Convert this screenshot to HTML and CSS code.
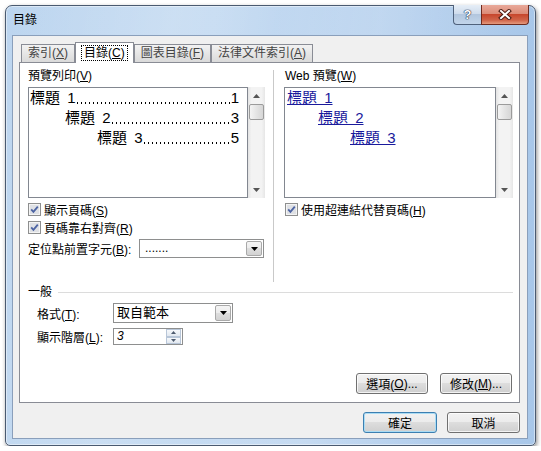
FILE: index.html
```html
<!DOCTYPE html>
<html lang="zh-TW">
<head>
    <meta charset="UTF-8">
    <title>目錄</title>
    <link rel="stylesheet" href="styles.css">
</head>
<body>
    <div class="window">
        <div class="titlebar">
            <span class="title">目錄</span>
            <div class="caption-btns">
                <span class="cap help">?</span>
                <span class="cap close">
                    <svg width="14" height="11" viewBox="0 0 14 11">
                        <path d="M3 2 L11 9 M11 2 L3 9" stroke="#4a1a12" stroke-width="4" stroke-linecap="square" fill="none"/>
                        <path d="M3 2 L11 9 M11 2 L3 9" stroke="#fff" stroke-width="2" stroke-linecap="square" fill="none"/>
                    </svg>
                </span>
            </div>
        </div>

        <div class="client">
            <!-- 頁籤 -->
            <div class="tabs">
                <span class="tab">索引(<u>X</u>)</span>
                <span class="tab active"><span class="focus">目錄(<u>C</u>)</span></span>
                <span class="tab">圖表目錄(<u>F</u>)</span>
                <span class="tab">法律文件索引(<u>A</u>)</span>
            </div>

            <div class="panel">
                <div class="previews">
                    <!-- 預覽列印 -->
                    <div class="col col-print">
                        <div class="label">預覽列印(<u>V</u>)</div>
                        <div class="listbox">
                            <div class="list print">
                                <div class="toc-line"><span class="entry">標題 1</span><span class="leader"></span><span>1</span></div>
                                <div class="toc-line l2"><span class="entry">標題 2</span><span class="leader"></span><span>3</span></div>
                                <div class="toc-line l3"><span class="entry">標題 3</span><span class="leader"></span><span>5</span></div>
                            </div>
                            <div class="vscroll">
                                <span class="sb-arrow"><svg width="7" height="4"><path d="M0 4 L3.5 0 L7 4 Z" fill="#555"/></svg></span>
                                <span class="sb-thumb"></span>
                                <span class="sb-space"></span>
                                <span class="sb-arrow"><svg width="7" height="4"><path d="M0 0 L7 0 L3.5 4 Z" fill="#555"/></svg></span>
                            </div>
                        </div>
                        <div class="check">
                            <svg class="cb" width="13" height="13" viewBox="0 0 13 13">
                                <rect x="0.5" y="0.5" width="12" height="12" fill="#f4f4f4" stroke="#8e8f8f"/>
                                <rect x="2" y="2" width="9" height="9" fill="#dfe1e5"/>
                                <path d="M3.2 6.4 L5.4 8.8 L9.8 3.6" stroke="#4d64a3" stroke-width="1.8" fill="none"/>
                            </svg>
                            <span>顯示頁碼(<u>S</u>)</span>
                        </div>
                        <div class="check">
                            <svg class="cb" width="13" height="13" viewBox="0 0 13 13">
                                <rect x="0.5" y="0.5" width="12" height="12" fill="#f4f4f4" stroke="#8e8f8f"/>
                                <rect x="2" y="2" width="9" height="9" fill="#dfe1e5"/>
                                <path d="M3.2 6.4 L5.4 8.8 L9.8 3.6" stroke="#4d64a3" stroke-width="1.8" fill="none"/>
                            </svg>
                            <span>頁碼靠右對齊(<u>R</u>)</span>
                        </div>
                        <div class="field">
                            <span class="flabel wide">定位點前置字元(<u>B</u>):</span>
                            <div class="combo leader-combo">
                                <span class="combo-value">.......</span>
                                <span class="combo-btn"><svg width="7" height="4"><path d="M0 0 L7 0 L3.5 4 Z" fill="#000"/></svg></span>
                            </div>
                        </div>
                    </div>

                    <div class="divider"></div>

                    <!-- Web 預覽 -->
                    <div class="col col-web">
                        <div class="label">Web 預覽(<u>W</u>)</div>
                        <div class="listbox">
                            <div class="list web">
                                <a class="toc-link">標題 1</a>
                                <a class="toc-link l2">標題 2</a>
                                <a class="toc-link l3">標題 3</a>
                            </div>
                            <div class="vscroll">
                                <span class="sb-arrow"><svg width="7" height="4"><path d="M0 4 L3.5 0 L7 4 Z" fill="#555"/></svg></span>
                                <span class="sb-thumb"></span>
                                <span class="sb-space"></span>
                                <span class="sb-arrow"><svg width="7" height="4"><path d="M0 0 L7 0 L3.5 4 Z" fill="#555"/></svg></span>
                            </div>
                        </div>
                        <div class="check">
                            <svg class="cb" width="13" height="13" viewBox="0 0 13 13">
                                <rect x="0.5" y="0.5" width="12" height="12" fill="#f4f4f4" stroke="#8e8f8f"/>
                                <rect x="2" y="2" width="9" height="9" fill="#dfe1e5"/>
                                <path d="M3.2 6.4 L5.4 8.8 L9.8 3.6" stroke="#4d64a3" stroke-width="1.8" fill="none"/>
                            </svg>
                            <span>使用超連結代替頁碼(<u>H</u>)</span>
                        </div>
                    </div>
                </div>

                <!-- 一般 -->
                <div class="group-head">一般</div>
                <div class="field indent row-format">
                    <span class="flabel">格式(<u>T</u>):</span>
                    <div class="combo format-combo">
                        <span class="combo-value">取自範本</span>
                        <span class="combo-btn"><svg width="7" height="4"><path d="M0 0 L7 0 L3.5 4 Z" fill="#000"/></svg></span>
                    </div>
                </div>
                <div class="field indent row-level">
                    <span class="flabel">顯示階層(<u>L</u>):</span>
                    <div class="spin">
                        <span class="spin-value">3</span>
                        <span class="spin-btns">
                            <span class="spin-btn"><svg width="5" height="3"><path d="M0 3 L2.5 0 L5 3 Z" fill="#4d5a6e"/></svg></span>
                            <span class="spin-btn"><svg width="5" height="3"><path d="M0 0 L5 0 L2.5 3 Z" fill="#4d5a6e"/></svg></span>
                        </span>
                    </div>
                </div>

                <div class="panel-buttons">
                    <span class="btn">選項(<u>O</u>)...</span>
                    <span class="btn">修改(<u>M</u>)...</span>
                </div>
            </div>

            <div class="dialog-buttons">
                <span class="btn default ok">確定</span>
                <span class="btn cancel">取消</span>
            </div>
        </div>
    </div>
</body>
</html>
```

FILE: styles.css
```css
body {
    margin: 0;
    background: #fff;
    font-family: "Liberation Sans", "Noto Sans CJK TC", sans-serif;
    font-size: 12px;
    color: #000;
}

/* 視窗外框 */
.window {
    box-sizing: border-box;
    width: 531px;
    height: 441px;
    margin: 5px 0 0 5px;
    padding: 0 7px 6px 6px;
    border: 1px solid #4a5a70;
    border-radius: 7px 7px 5px 5px;
    background:
        linear-gradient(100deg, rgba(255,255,255,0) 0%, rgba(255,255,255,.18) 28%, rgba(255,255,255,.05) 45%, rgba(255,255,255,.15) 62%, rgba(255,255,255,0) 85%),
        linear-gradient(90deg, #bcd5ef 0%, #c2d9f1 40%, #b4cfed 75%, #a8c7e9 100%);
    box-shadow: inset 0 0 0 1px rgba(255,255,255,.45), 1px 2px 4px rgba(0,0,0,.45);
    display: flex;
    flex-direction: column;
}
.titlebar {
    height: 29px;
    flex: none;
    display: flex;
    justify-content: space-between;
    align-items: flex-start;
}
.title {
    padding: 7px 0 0 1px;
    line-height: 14px;
}
.caption-btns {
    display: flex;
    margin: -1px -1px 0 0;
}
.cap {
    box-sizing: border-box;
    height: 20px;
    border: 1px solid #50627c;
    border-top: none;
    display: flex;
    align-items: center;
    justify-content: center;
}
.help {
    width: 28px;
    border-right: none;
    border-radius: 0 0 0 4px;
    background: linear-gradient(#e6eef7 0%, #cfdcec 45%, #b2c6de 50%, #c2d5ea 100%);
    color: #fff;
    font-weight: bold;
    font-size: 13px;
    text-shadow: 0 0 1px #1d2d4a, 0 0 1px #1d2d4a, 0 0 1px #1d2d4a;
}
.close {
    width: 48px;
    border-color: #6e2b1f;
    border-radius: 0 0 4px 0;
    background: linear-gradient(#e9a99a 0%, #dc8c78 45%, #c7472d 50%, #d0654a 80%, #e59a7e 100%);
}

/* 對話方塊內容 */
.client {
    flex: 1;
    border: 1px solid #8a9fbb;
    background: #f0f0f0;
    padding: 6px 0 0 6px;
}
.tabs {
    display: flex;
    align-items: flex-end;
    height: 20px;
    margin-left: 2px;
}
.tab {
    box-sizing: border-box;
    height: 18px;
    padding: 0 6px;
    border: 1px solid #898c95;
    border-bottom: none;
    line-height: 17px;
    color: #444;
    background: linear-gradient(#f2f2f2, #dadada);
}
.tab.active {
    position: relative;
    z-index: 1;
    height: 21px;
    margin-bottom: -1px;
    padding: 2px 6px 0;
    background: #fff;
    color: #000;
}
.focus {
    display: inline-block;
    padding: 0 2px;
    line-height: 14px;
    outline: 1px dotted #000;
}

.panel {
    box-sizing: border-box;
    width: 501px;
    height: 341px;
    border: 1px solid #898c95;
    background: #fff;
    padding: 6px 5px 0 8px;
}
.previews {
    display: flex;
    height: 213px;
}
.col {
    flex: none;
    min-width: 0;
}
.col-print {
    width: 237px;
}
.col-web {
    width: 229px;
}
.divider {
    flex: none;
    width: 1px;
    margin: 1px 10px 0 8px;
    background: #c9c9c9;
}
.label {
    line-height: 14px;
    margin-bottom: 4px;
}
.col-web .label {
    padding-left: 1px;
}
.listbox {
    display: flex;
    height: 111px;
}
.list {
    flex: 1;
    min-width: 0;
    overflow: hidden;
    border: 1px solid #828790;
    background: #fff;
    font-size: 15px;
    line-height: 20px;
    word-spacing: 3px;
}
.list.print {
    padding: 0 8px 0 1px;
}
.toc-line {
    display: flex;
    white-space: nowrap;
}
.toc-line.l2 { padding-left: 35px; }
.toc-line.l3 { padding-left: 67px; }
/* 前置字元：點線 */
.leader {
    flex: 1;
    min-width: 0;
    margin: 0 1px;
    background: linear-gradient(90deg, #000 0 1.5px, transparent 1.5px) left 14px / 4px 2px repeat-x;
}
.list.web {
    padding-left: 2px;
}
.toc-link {
    display: block;
    width: max-content;
    color: #1a1a9c;
    text-decoration: underline;
}
.toc-link.l2 { margin-left: 31px; }
.toc-link.l3 { margin-left: 63px; }

/* 捲軸 */
.vscroll {
    flex: none;
    width: 17px;
    display: flex;
    flex-direction: column;
    align-items: center;
    background: linear-gradient(90deg, #e3e3e3, #f3f3f3 20%, #f3f3f3 80%, #e6e6e6);
}
.sb-arrow {
    height: 17px;
    display: flex;
    align-items: center;
    justify-content: center;
}
.sb-thumb {
    box-sizing: border-box;
    width: 15px;
    height: 16px;
    border: 1px solid #9b9b9b;
    border-radius: 2px;
    background: linear-gradient(90deg, #f4f4f4, #e4e4e4 50%, #d6d6d6);
}
.sb-space {
    flex: 1;
}

/* 核取方塊 */
.check {
    display: flex;
    align-items: center;
    gap: 3px;
    height: 18px;
}
.listbox + .check {
    margin-top: 2px;
}
.col-web .check {
    padding-left: 1px;
}
.cb {
    flex: none;
}

/* 欄位 */
.field {
    display: flex;
    align-items: center;
    margin-top: 3px;
}
.flabel.wide {
    width: 111px;
}
.indent {
    padding-left: 9px;
}
.indent .flabel {
    width: 76px;
}
.combo {
    box-sizing: border-box;
    display: flex;
    justify-content: space-between;
    border: 1px solid #8e8f8f;
    background: #fff;
}
.leader-combo {
    width: 125px;
    height: 19px;
}
.format-combo {
    width: 120px;
    height: 20px;
}
.combo-value {
    padding-left: 5px;
    line-height: 17px;
}
.format-combo .combo-value {
    padding-left: 3px;
    line-height: 18px;
    font-size: 13px;
}
.combo-btn {
    box-sizing: border-box;
    width: 16px;
    margin: 1px;
    border: 1px solid #a9a9a9;
    border-radius: 2px;
    background: linear-gradient(#f4f4f4 0%, #ececec 49%, #dedede 50%, #d2d2d2 100%);
    display: flex;
    align-items: center;
    justify-content: center;
}

.group-head {
    display: flex;
    align-items: center;
    margin-top: 3px;
    line-height: 14px;
}
.group-head::after {
    content: "";
    flex: 1;
    margin: 0 1px 0 6px;
    border-top: 1px solid #dcdcdc;
}
.row-format {
    margin-top: 4px;
}
.row-level {
    margin-top: 5px;
}
.spin {
    box-sizing: border-box;
    width: 70px;
    height: 17px;
    display: flex;
    justify-content: space-between;
    border: 1px solid #8e8f8f;
    background: #fff;
}
.spin-value {
    padding-left: 3px;
    line-height: 15px;
    font-style: italic;
}
.spin-btns {
    width: 15px;
    display: flex;
    flex-direction: column;
    margin: 0 1px 0 0;
}
.spin-btn {
    flex: 1;
    box-sizing: border-box;
    border: 1px solid #b8c6d8;
    background: linear-gradient(#f6f8fb, #e2e8f0);
    display: flex;
    align-items: center;
    justify-content: center;
}

/* 按鈕 */
.btn {
    box-sizing: border-box;
    width: 72px;
    height: 21px;
    border: 1px solid #707070;
    border-radius: 3px;
    background: linear-gradient(#f2f2f2 0%, #ebebeb 49%, #dddddd 50%, #cfcfcf 100%);
    box-shadow: inset 0 0 0 1px rgba(255,255,255,.75);
    display: flex;
    align-items: center;
    justify-content: center;
}
.panel-buttons {
    display: flex;
    justify-content: flex-end;
    gap: 12px;
    margin-top: 28px;
    padding-right: 2px;
}
.dialog-buttons {
    display: flex;
    justify-content: flex-end;
    gap: 10px;
    margin: 9px 7px 0 0;
}
.btn.ok {
    width: 74px;
}
.btn.cancel {
    width: 73px;
}
.btn.default {
    border-color: #3c7fb1;
    box-shadow: inset 0 0 0 1px #aadcf4;
}
```
